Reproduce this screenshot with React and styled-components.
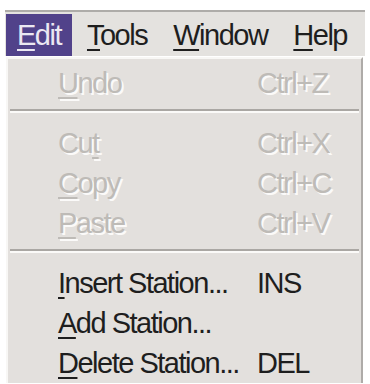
import React from 'react';
import styled, {createGlobalStyle} from 'styled-components';

const GlobalStyle = createGlobalStyle`
body {
    margin:0;
    background:#fff;
    font-family:'Liberation Sans', Arial, sans-serif;
}
`

const Window = styled.div`
width:360px;
padding:10px 0 0 5px;
`

const MenuBar = styled.div`
display:flex;
gap:4px;
height:42px;
padding:2px 0 0 1px;
background:#e4e2df;
border-top:2px solid #aeaca9;
`

const BarItem = styled.div`
display:flex;
align-items:center;
padding:0 11px;
font-size:29px;
letter-spacing:-1.5px;
color:${p => p.active ? '#ebe8f2' : '#1e1e1e'};
background:${p => p.active ? '#51428a' : 'transparent'};
`

const Key = styled.u`
text-decoration-thickness:2px;
text-underline-offset:4px;
`

const Dropdown = styled.div`
margin:1px 0 0 1px;
width:353px;
padding:4px 0 0;
background:#e3e0dd;
border-left:2px solid #f8f7f5;
border-top:2px solid #f8f7f5;
border-right:2px solid #aeaba8;
`

const Row = styled.div`
display:grid;
grid-template-columns:199px 1fr;
height:40px;
line-height:40px;
padding-left:50px;
font-size:29px;
letter-spacing:-1.5px;
color:${p => p.disabled ? '#bebbb7' : '#1e1e1e'};
text-shadow:${p => p.disabled ? '2px 2px 0 #fbfaf9' : 'none'};
`

const Separator = styled.div`
margin:6px 2px 10px;
border-top:2px solid #aaa7a3;
border-bottom:2px solid #fbfaf8;
`

const sections = [
    [
        {label:'Undo', key:0, shortcut:'Ctrl+Z', disabled:true},
    ],
    [
        {label:'Cut', key:2, shortcut:'Ctrl+X', disabled:true},
        {label:'Copy', key:0, shortcut:'Ctrl+C', disabled:true},
        {label:'Paste', key:0, shortcut:'Ctrl+V', disabled:true},
    ],
    [
        {label:'Insert Station...', key:0, shortcut:'INS'},
        {label:'Add Station...', key:0, shortcut:''},
        {label:'Delete Station...', key:0, shortcut:'DEL'},
    ],
]

const Label = ({text, at}) => (
    <span>
        {text.slice(0, at)}<Key>{text[at]}</Key>{text.slice(at + 1)}
    </span>
)

const App = () => {
    return (
        <Window>
            <GlobalStyle />
            <MenuBar>
                <BarItem active><Label text="Edit" at={0} /></BarItem>
                <BarItem><Label text="Tools" at={0} /></BarItem>
                <BarItem><Label text="Window" at={0} /></BarItem>
                <BarItem><Label text="Help" at={0} /></BarItem>
            </MenuBar>
            <Dropdown>
                {sections.map((items, i) => (
                    <React.Fragment key={i}>
                        {i > 0 && <Separator />}
                        {items.map(item => (
                            <Row key={item.label} disabled={item.disabled}>
                                <Label text={item.label} at={item.key} />
                                <span>{item.shortcut}</span>
                            </Row>
                        ))}
                    </React.Fragment>
                ))}
            </Dropdown>
        </Window>
    )
}

export default App;
